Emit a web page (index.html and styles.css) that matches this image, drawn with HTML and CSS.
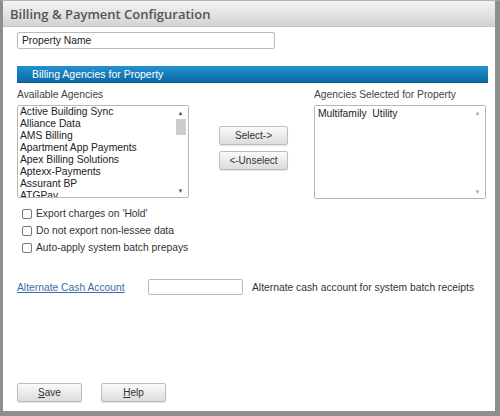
FILE: index.html
```html
<!DOCTYPE html>
<html lang="en">
<head>
  <meta charset="UTF-8">
  <title>Billing &amp; Payment Configuration</title>
  <link rel="stylesheet" href="styles.css">
</head>
<body>
  <div class="window">
    <div class="titlebar">Billing &amp; Payment Configuration</div>

    <div class="content">
      <input type="text" class="prop-name" value="Property Name">

      <div class="section-bar">Billing Agencies for Property</div>

      <div class="agencies">
        <div class="list-col">
          <div class="list-label">Available Agencies</div>
          <div class="listbox">
            <div class="items">
              <div>Active Building Sync</div>
              <div>Alliance Data</div>
              <div>AMS Billing</div>
              <div>Apartment App Payments</div>
              <div>Apex Billing Solutions</div>
              <div>Aptexx-Payments</div>
              <div>Assurant BP</div>
              <div>ATGPay</div>
            </div>
            <div class="scroll">
              <span class="arrow">&#9650;</span>
              <span class="thumb"></span>
              <span class="spacer"></span>
              <span class="arrow">&#9660;</span>
            </div>
          </div>
        </div>

        <div class="move-col">
          <button class="btn move">Select-&gt;</button>
          <button class="btn move">&lt;-Unselect</button>
        </div>

        <div class="list-col">
          <div class="list-label">Agencies Selected for Property</div>
          <div class="listbox selected">
            <div class="items">
              <div>Multifamily&nbsp; Utility</div>
            </div>
            <div class="scroll light">
              <span class="arrow">&#9650;</span>
              <span class="spacer"></span>
              <span class="arrow">&#9660;</span>
            </div>
          </div>
        </div>
      </div>

      <div class="options">
        <label class="check"><input type="checkbox"> Export charges on 'Hold'</label>
        <label class="check"><input type="checkbox"> Do not export non-lessee data</label>
        <label class="check"><input type="checkbox"> Auto-apply system batch prepays</label>
      </div>

      <div class="cash-row">
        <a href="#" class="cash-link">Alternate Cash Account</a>
        <input type="text" class="cash-input">
        <span class="cash-note">Alternate cash account for system batch receipts</span>
      </div>

      <div class="footer">
        <button class="btn action"><u>S</u>ave</button>
        <button class="btn action"><u>H</u>elp</button>
      </div>
    </div>
  </div>
</body>
</html>
```

FILE: styles.css
```css
* { box-sizing: border-box; }
body {
  margin: 0;
  font-family: 'Liberation Sans', Arial, sans-serif;
  font-size: 10.3px;
  color: #333;
  background: #fff;
}
.window {
  width: 500px;
  height: 416px;
  border: 3px solid #8e8e8e;
  border-top: 1px solid #b5b5b5;
  border-right-width: 5px;
  border-bottom-width: 5px;
  display: flex;
  flex-direction: column;
  background: #fff;
}
.titlebar {
  height: 26px;
  line-height: 26px;
  padding-left: 7px;
  font-family: 'Open Sans', sans-serif;
  font-size: 13px;
  font-weight: 600;
  color: #555;
  background: linear-gradient(#f4f4f4, #d3d3d3);
  border-bottom: 1px solid #c6c6c6;
}
.content {
  flex: 1;
  display: flex;
  flex-direction: column;
  padding: 5px 7px 0 14px;
}
.prop-name {
  width: 258px;
  height: 17px;
  border: 1px solid #b9b9b9;
  border-radius: 2px;
  padding: 0 4px;
  font-family: 'Liberation Sans', Arial, sans-serif;
  font-size: 10.3px;
  color: #222;
}
.section-bar {
  margin-top: 17px;
  width: 471px;
  height: 17px;
  line-height: 17px;
  padding-left: 15px;
  color: #fff;
  font-size: 10.5px;
  background: linear-gradient(#2391cf, #0b6aa6);
  border-bottom: 1px solid #0a5a8e;
}
.agencies {
  display: flex;
  margin-top: 5px;
}
.list-label {
  height: 17px;
  color: #444;
  padding-top: 1px;
}
.listbox {
  display: flex;
  width: 172px;
  height: 93px;
  border: 1px solid #b7b7b7;
  border-radius: 2px;
  overflow: hidden;
}
.listbox.selected {
  height: 94px;
}
.items {
  flex: 1;
  padding: 0 2px;
  line-height: 12px;
  color: #222;
  white-space: nowrap;
  overflow: hidden;
}
.selected .items {
  padding: 2px 3px;
}
.scroll {
  width: 15px;
  display: flex;
  flex-direction: column;
  align-items: center;
  padding: 3px 0 2px;
  background: #fff;
}
.arrow {
  font-size: 6px;
  line-height: 8px;
  color: #555;
}
.scroll.light .arrow {
  color: #aaa;
}
.thumb {
  width: 10px;
  height: 16px;
  margin-top: 2px;
  background: #cdcdcd;
}
.spacer {
  flex: 1;
}
.move-col {
  display: flex;
  flex-direction: column;
  gap: 6px;
  margin: 38px 26px 0 30px;
}
.btn {
  font-family: 'Liberation Sans', Arial, sans-serif;
  font-size: 10px;
  color: #333;
  background: linear-gradient(#fafafa, #dcdcdc);
  border: 1px solid #bdbdbd;
  border-radius: 2px;
  box-shadow: 0 1px 1px rgba(0, 0, 0, 0.12);
  padding: 0;
  cursor: pointer;
}
.move {
  width: 69px;
  height: 19px;
}
.options {
  display: flex;
  flex-direction: column;
  margin-top: 6px;
  padding-left: 5px;
}
.check {
  display: flex;
  align-items: center;
  height: 17px;
  color: #333;
}
.check input {
  appearance: none;
  width: 10px;
  height: 10px;
  margin: 0 4px 0 0;
  border: 1px solid #777;
  border-radius: 2px;
  background: #fff;
}
.cash-row {
  display: flex;
  align-items: center;
  margin-top: 23px;
  white-space: nowrap;
}
.cash-link {
  color: #3b6ea8;
  width: 131px;
}
.cash-input {
  width: 95px;
  height: 16px;
  border: 1px solid #b9b9b9;
  border-radius: 2px;
}
.cash-note {
  margin-left: 9px;
  color: #333;
}
.footer {
  display: flex;
  gap: 19px;
  margin-top: 88px;
}
.action {
  width: 65px;
  height: 19px;
}
```
